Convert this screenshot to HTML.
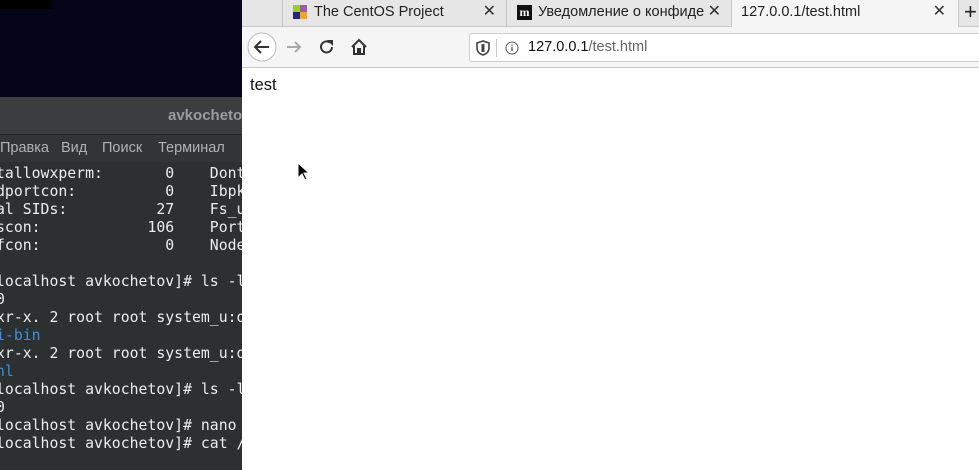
<!DOCTYPE html>
<html><head><meta charset="utf-8"><style>
*{margin:0;padding:0;box-sizing:border-box}
body{width:979px;height:470px;overflow:hidden;position:relative;background:#2d3030;font-family:"Liberation Sans","DejaVu Sans",sans-serif}
.nav{position:absolute;left:0;top:0;width:242px;height:97px;background:#04041a}
.nav .a{position:absolute;left:0;top:0;width:52px;height:9px;background:#000}
.th{position:absolute;left:0;top:97px;width:242px;height:38px;background:#3b3e3e;border-bottom:1px solid #262828;color:#9a9d9d;font-weight:bold;font-size:15px;line-height:38px}
.th span{position:absolute;left:168px}
.mb{position:absolute;left:0;top:135px;width:242px;height:27px;background:#323535;color:#b0b3b3;font-size:14.5px;line-height:27px;white-space:nowrap}
.mb span{position:absolute}
.term{position:absolute;left:-4px;top:165px;font-family:"DejaVu Sans Mono",monospace;font-size:14.8px;line-height:18px;color:#ececec;white-space:pre}
.b{color:#3a8fe0}
.br{position:absolute;left:242px;top:0;width:737px;height:470px;background:#fff}
.tabs{position:absolute;left:0;top:0;width:737px;height:27px;background:#e6e6e6;border-bottom:1px solid #c8c8c8}
.tab{position:absolute;top:0;height:26px;font-size:14.5px;line-height:24px;color:#222;white-space:nowrap;overflow:hidden}
.tab .x{position:absolute;right:10px;top:0;font-size:16px;color:#333;background:inherit}
.tb{position:absolute;left:0;top:27px;width:737px;height:41px;background:#f5f5f5;border-bottom:1px solid #c8c8c8}
.url{position:absolute;left:227px;top:6px;width:520px;height:29px;background:#fff;border:1px solid #cfcfcf;border-radius:3px;font-size:14.5px;line-height:27px}
</style></head><body>
<div class="nav"><div class="a"></div></div>
<div class="th"><span>avkochetov</span></div>
<div class="mb"><span style="left:0">Правка</span><span style="left:61px">Вид</span><span style="left:102px">Поиск</span><span style="left:158px">Терминал</span></div>
<div class="term">tallowxperm:       0    Dont
dportcon:          0    Ibpk
al SIDs:          27    Fs_u
scon:            106    Port
fcon:              0    Node

localhost avkochetov]# ls -l
0
xr-x. 2 root root system_u:o
<span class="b">i-bin</span>
xr-x. 2 root root system_u:o
<span class="b">nl</span>
localhost avkochetov]# ls -l
0
localhost avkochetov]# nano
localhost avkochetov]# cat /</div>
<div class="br">
<div class="tabs">
<div class="tab" style="left:40px;width:225px;border-left:1px solid #c8c8c8;border-right:1px solid #c8c8c8;background:#e6e6e6"><span style="position:absolute;left:10px;top:5px;width:14px;height:14px;background:conic-gradient(#9c5bb0 0 25%,#efa724 0 50%,#262577 0 75%,#9ccd2a 0)"></span><span style="position:absolute;left:31px">The CentOS Project</span><span class="x">✕</span></div>
<div class="tab" style="left:265px;width:225px;border-right:1px solid #c8c8c8;background:#e6e6e6"><span style="position:absolute;left:10px;top:5px;width:15px;height:15px;background:#111;color:#fff;font-size:12px;line-height:14px;text-align:center;font-weight:bold;font-family:'Liberation Serif',serif">m</span><span style="position:absolute;left:31px">Уведомление о конфиде</span><span class="x">✕</span></div>
<div class="tab" style="left:490px;width:226px;background:#f5f5f5;height:27px"><span style="position:absolute;left:9px">127.0.0.1/test.html</span><span class="x" style="right:12px">✕</span></div>
<div class="tab" style="left:716px;width:21px;border-left:1px solid #c8c8c8;font-size:22px;line-height:24px;padding-left:5px">+</div>
</div>
<div class="tb">
<svg style="position:absolute;left:5px;top:4px" width="30" height="32"><circle cx="15" cy="16" r="14" fill="#fff" stroke="#bbb"/><path d="M22 16H9M14 10l-6 6 6 6" stroke="#333" stroke-width="2" fill="none"/></svg>
<svg style="position:absolute;left:43px;top:11px" width="18" height="18"><path d="M2 9h13M10 4l5 5-5 5" stroke="#aaa" stroke-width="2" fill="none"/></svg>
<svg style="position:absolute;left:76px;top:11px" width="18" height="18"><path d="M14 9a5.5 5.5 0 1 1-2-4.3" stroke="#333" stroke-width="2" fill="none"/><path d="M9 2h6v6z" fill="#333"/></svg>
<svg style="position:absolute;left:108px;top:11px" width="18" height="18"><path d="M2 9L9 2l7 7M4 8v8h4v-5h2v5h4V8" stroke="#333" stroke-width="2" fill="none"/></svg>
<div class="url">
<svg style="position:absolute;left:6px;top:6px" width="14" height="16"><path d="M7 1L1 3v5c0 4 3 6 6 7 3-1 6-3 6-7V3z" stroke="#444" stroke-width="1.6" fill="none"/><path d="M7 4v8" stroke="#444" stroke-width="3"/></svg>
<div style="position:absolute;left:26px;top:5px;width:1px;height:18px;background:#ccc"></div>
<svg style="position:absolute;left:35px;top:7px" width="14" height="14"><circle cx="7" cy="7" r="6" stroke="#555" fill="none"/><path d="M7 6v4M7 3.5v1.2" stroke="#555" stroke-width="1.4"/></svg>
<span style="position:absolute;left:58px;color:#111">127.0.0.1<span style="color:#666">/test.html</span></span>
</div>
</div>
<div style="position:absolute;left:8px;top:76px;font-size:16.5px;color:#111">test</div>
<svg style="position:absolute;left:55px;top:162px" width="14" height="20"><path d="M1 1v15l4-4 3 6 2-1-3-6h5z" fill="#000" stroke="#fff"/></svg>
</div>
</body></html>
